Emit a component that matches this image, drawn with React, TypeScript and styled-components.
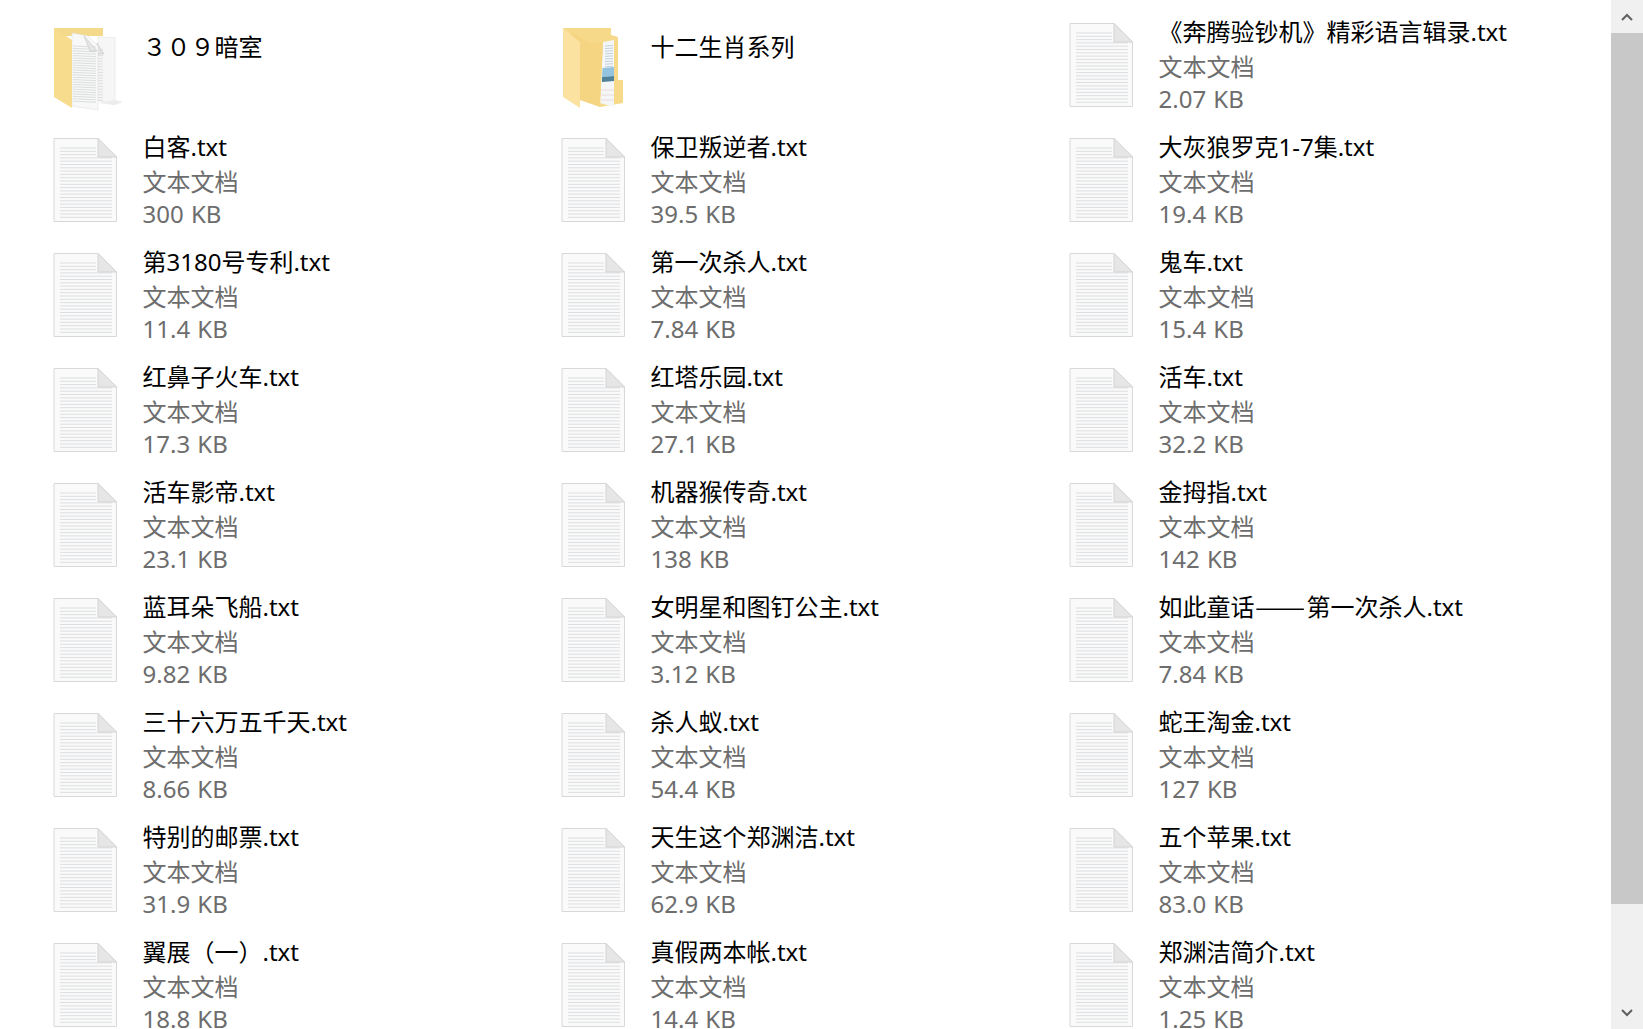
import React from 'react';
import styled, { createGlobalStyle } from 'styled-components';

const GlobalStyle = createGlobalStyle`
  html, body {
    margin: 0;
    padding: 0;
    height: 100%;
    overflow: hidden;
    background: #fff;
  }
`;

const Window = styled.div`
  display: flex;
  width: 1643px;
  height: 1029px;
  overflow: hidden;
  font-family: "Noto Sans", "Noto Sans CJK SC", sans-serif;
`;

const FileGrid = styled.main`
  flex: 1;
  display: grid;
  grid-template-columns: repeat(3, 508px);
  grid-auto-rows: 115px;
  padding: 8px 0 0 50px;
  overflow: hidden;
`;

const Item = styled.div`
  display: flex;
  gap: 20.5px;
  padding-top: 7px;
  min-width: 0;
`;

const IconBox = styled.svg`
  flex: none;
  width: 72px;
  height: 95px;
  margin-top: 5px;
  filter: blur(0.3px);
`;

const Texts = styled.div<{ $folder?: boolean }>`
  display: flex;
  flex-direction: column;
  padding-top: ${props => (props.$folder ? '15px' : '0')};
  white-space: nowrap;
`;

const Name = styled.div`
  height: 33px;
  margin-bottom: 3px;
  font-size: 24px;
  line-height: 33px;
  color: #000;
`;

const Dash = styled.span`
  display: inline-block;
  width: 52px;
  line-height: 0;
  font-family: "Noto Sans CJK SC", sans-serif;
  transform: scaleX(1.25);
  transform-origin: left center;
`;

const Meta = styled.div`
  height: 32px;
  font-size: 24px;
  line-height: 32px;
  word-spacing: 1px;
  color: #6d6d6d;
`;

const Scrollbar = styled.aside`
  flex: none;
  width: 32px;
  display: flex;
  flex-direction: column;
  background: #f0f0f0;
`;

const ScrollButton = styled.div`
  flex: none;
  height: 33px;
  display: flex;
  align-items: center;
  justify-content: center;
  color: #606060;
`;

const Thumb = styled.div`
  flex: none;
  height: 871px;
  background: #c8c8c8;
`;

const Spacer = styled.div`
  flex: 1;
`;

function DocIcon() {
  const lines = Array.from({ length: 22 }, (_, i) => 33 + i * 3.3);
  return (
    <IconBox viewBox="50 20 72 95">
      <path d="M54 23.5H98L116.5 42V106.5H54Z" fill="#fafafa" stroke="#d8d8d8" />
      {lines.map(y => (
        <line
          key={y}
          x1="60"
          x2={y < 42 ? 96 : 112}
          y1={y}
          y2={y}
          stroke="#dcdee0"
          strokeWidth="1"
        />
      ))}
      <path d="M98 23.5V42H116.5Z" fill="#e6e6e6" stroke="#d4d4d4" />
    </IconBox>
  );
}

function StackFolderIcon() {
  const back = Array.from({ length: 19 }, (_, i) => 50 + i * 2.8);
  const front = Array.from({ length: 24 }, (_, i) => 46 + i * 2.4);
  return (
    <IconBox viewBox="50 20 72 95">
      <path d="M54 28H103V36H54Z" fill="#f3d98a" />
      <path d="M98 37L115 37.5V105L98 100Z" fill="#f6f6f6" stroke="#e4e4e4" strokeWidth="0.6" />
      <path d="M98 103L115 105L123 102L115 100Z" fill="#ececec" />
      {back.map(y => (
        <line key={y} x1="98" x2="103" y1={y} y2={y} stroke="#d0d2d4" strokeWidth="0.7" />
      ))}
      <path d="M97 43L104 54H97Z" fill="#e2e2e2" stroke="#c8c8c8" strokeWidth="0.6" />
      <path d="M72 33L88 36L98 46V110L72 106Z" fill="#f8f8f8" stroke="#e2e2e2" strokeWidth="0.6" />
      {front.map(y => (
        <line key={y} x1="73" x2="96" y1={y} y2={y + 1} stroke="#cfd1d3" strokeWidth="0.7" />
      ))}
      <path d="M84 36L90 51H97Z" fill="#e6e6e6" stroke="#c4c4c4" strokeWidth="0.6" />
      <path d="M54 28L72 40V108L54 97Z" fill="#f8dc8e" />
    </IconBox>
  );
}

function PictureFolderIcon() {
  const lines = Array.from({ length: 9 }, (_, i) => 46 + i * 2.6);
  return (
    <IconBox viewBox="50 20 72 95">
      <path d="M55 28H103V35L110 37V80H115V103L92 107Z" fill="#f7d98a" />
      <path d="M95 42L106 40V107L92 103Z" fill="#f4f6f8" />
      {lines.map(y => (
        <line key={y} x1="97" x2="105" y1={y} y2={y - 0.5} stroke="#b4c6d3" strokeWidth="0.8" />
      ))}
      <path d="M94.5 68L106 67V76L94 77Z" fill="#93c3de" />
      <path d="M94 77L106 76V81L94 82Z" fill="#4f8199" />
      <path d="M93 90H106M93 95H106M93 100H106" stroke="#eed5d0" strokeWidth="0.8" />
      <path d="M64 32L82 43L95 42L92 107L72 100Z" fill="#f6d582" />
      <path d="M55 28L72 42V108L55 97Z" fill="#fbe2a0" />
    </IconBox>
  );
}

function Chevron({ up }: { up?: boolean }) {
  return (
    <svg width="12" height="8" viewBox="0 0 12 8">
      <path
        d={up ? 'M1 7L6 2L11 7' : 'M1 1L6 6L11 1'}
        fill="none"
        stroke="currentColor"
        strokeWidth="2"
      />
    </svg>
  );
}

const files = [
  ['《奔腾验钞机》精彩语言辑录.txt', '2.07 KB'],
  ['白客.txt', '300 KB'],
  ['保卫叛逆者.txt', '39.5 KB'],
  ['大灰狼罗克1-7集.txt', '19.4 KB'],
  ['第3180号专利.txt', '11.4 KB'],
  ['第一次杀人.txt', '7.84 KB'],
  ['鬼车.txt', '15.4 KB'],
  ['红鼻子火车.txt', '17.3 KB'],
  ['红塔乐园.txt', '27.1 KB'],
  ['活车.txt', '32.2 KB'],
  ['活车影帝.txt', '23.1 KB'],
  ['机器猴传奇.txt', '138 KB'],
  ['金拇指.txt', '142 KB'],
  ['蓝耳朵飞船.txt', '9.82 KB'],
  ['女明星和图钉公主.txt', '3.12 KB'],
  ['如此童话——第一次杀人.txt', '7.84 KB'],
  ['三十六万五千天.txt', '8.66 KB'],
  ['杀人蚁.txt', '54.4 KB'],
  ['蛇王淘金.txt', '127 KB'],
  ['特别的邮票.txt', '31.9 KB'],
  ['天生这个郑渊洁.txt', '62.9 KB'],
  ['五个苹果.txt', '83.0 KB'],
  ['翼展（一）.txt', '18.8 KB'],
  ['真假两本帐.txt', '14.4 KB'],
  ['郑渊洁简介.txt', '1.25 KB'],
];

function FileName({ text }: { text: string }) {
  const [head, tail] = text.split('——');
  if (tail === undefined) return <Name>{text}</Name>;
  return (
    <Name>
      {head}
      <Dash>——</Dash>
      {tail}
    </Name>
  );
}

export default function App() {
  return (
    <Window>
      <GlobalStyle />
      <FileGrid>
        <Item>
          <StackFolderIcon />
          <Texts $folder>
            <Name>３０９暗室</Name>
          </Texts>
        </Item>
        <Item>
          <PictureFolderIcon />
          <Texts $folder>
            <Name>十二生肖系列</Name>
          </Texts>
        </Item>
        {files.map(([name, size]) => (
          <Item key={name}>
            <DocIcon />
            <Texts>
              <FileName text={name} />
              <Meta>文本文档</Meta>
              <Meta>{size}</Meta>
            </Texts>
          </Item>
        ))}
      </FileGrid>
      <Scrollbar>
        <ScrollButton>
          <Chevron up />
        </ScrollButton>
        <Thumb />
        <Spacer />
        <ScrollButton>
          <Chevron />
        </ScrollButton>
      </Scrollbar>
    </Window>
  );
}
